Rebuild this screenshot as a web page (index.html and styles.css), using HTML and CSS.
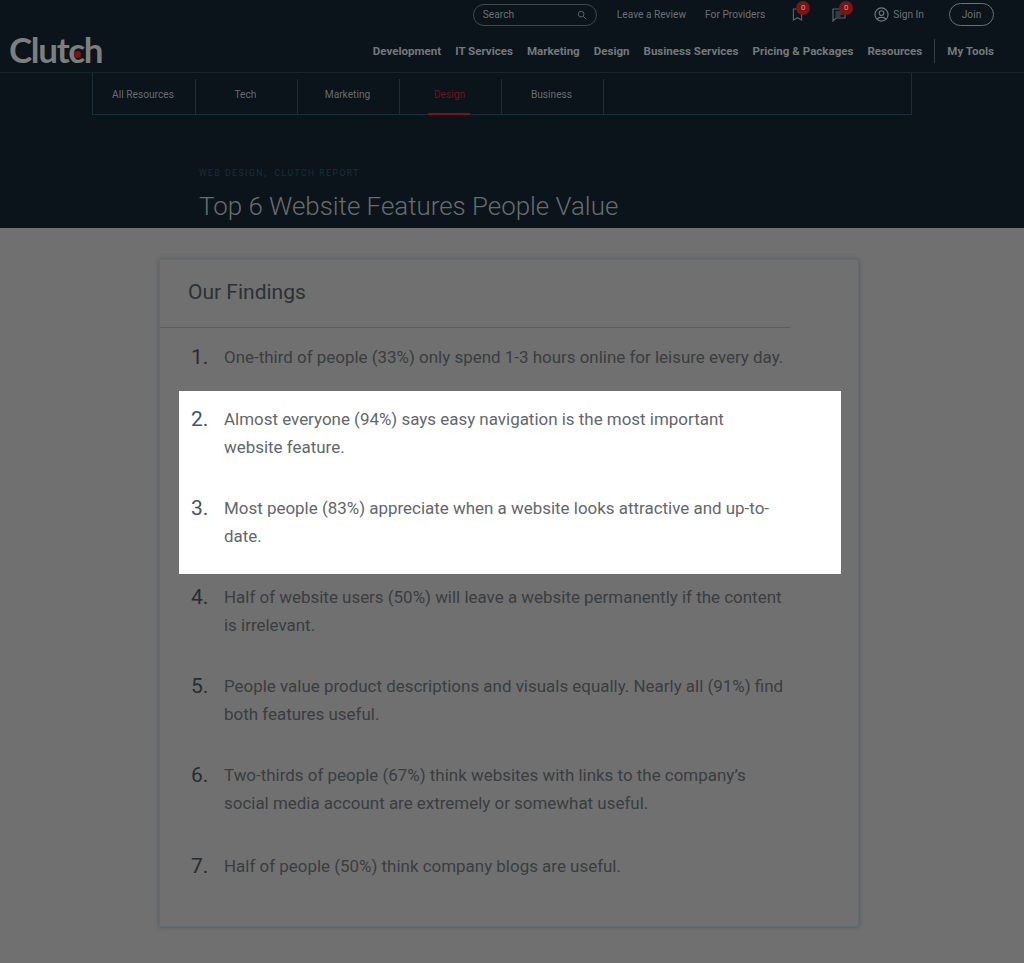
FILE: index.html
```html
<!DOCTYPE html>
<html lang="en">
<head>
    <meta charset="UTF-8">
    <title>Top 6 Website Features People Value</title>
    <link rel="stylesheet" href="styles.css">
</head>
<body>
    <header class="site-header">
        <div class="top-bar">
            <div class="search-box">
                <span>Search</span>
                <svg class="search-icon" viewBox="0 0 12 12" width="10" height="10"><circle cx="5" cy="5" r="3.4"/><path d="M7.6 7.6 11 11"/></svg>
            </div>
            <a class="top-link review-link">Leave a Review</a>
            <a class="top-link">For Providers</a>
            <div class="icon-badge bookmark">
                <svg viewBox="0 0 12 14" width="11" height="13"><path d="M1.5 1h9v12L6 10.5 1.500 13z"/></svg>
                <span class="badge">0</span>
            </div>
            <div class="icon-badge messages">
                <svg viewBox="0 0 14 14" width="14" height="14"><path d="M1 1h12v9H4l-3 3zM3.500 4h7M3.500 6h7M3.500 8h5"/></svg>
                <span class="badge">0</span>
            </div>
            <a class="top-link sign-in">
                <svg viewBox="0 0 16 16" width="15" height="15"><circle cx="8" cy="8" r="7"/><circle cx="8" cy="6.500" r="2.500"/><path d="M3.500 13c1-2.500 8-2.500 9 0"/></svg>
                Sign In
            </a>
            <a class="join-btn">Join</a>
        </div>

        <div class="main-bar">
            <div class="logo">Clutch<span class="logo-dot"></span></div>
            <nav class="main-nav">
                <a>Development</a>
                <a>IT Services</a>
                <a>Marketing</a>
                <a>Design</a>
                <a>Business Services</a>
                <a>Pricing &amp; Packages</a>
                <a>Resources</a>
                <a class="my-tools">My Tools</a>
            </nav>
        </div>

        <div class="sub-nav-wrap">
            <nav class="sub-nav">
                <a>All Resources</a>
                <a>Tech</a>
                <a>Marketing</a>
                <a class="active">Design</a>
                <a>Business</a>
            </nav>
        </div>

        <div class="post-head">
            <p class="post-cats">WEB DESIGN,&nbsp; CLUTCH REPORT</p>
            <h1>Top 6 Website Features People Value</h1>
        </div>
    </header>

    <main class="content">
        <section class="findings">
            <h2>Our Findings</h2>
            <ol class="findings-list">
                <li class="finding"><span class="num">1.</span><p>One-third of people (33%) only spend 1-3 hours online for leisure every day.</p></li>
                <li class="highlight">
                    <ol class="findings-list">
                        <li class="finding"><span class="num">2.</span><p>Almost everyone (94%) says easy navigation is the most important website feature.</p></li>
                        <li class="finding"><span class="num">3.</span><p>Most people (83%) appreciate when a website looks attractive and up-to-date.</p></li>
                    </ol>
                </li>
                <li class="finding"><span class="num">4.</span><p>Half of website users (50%) will leave a website permanently if the content is irrelevant.</p></li>
                <li class="finding"><span class="num">5.</span><p>People value product descriptions and visuals equally. Nearly all (91%) find both features useful.</p></li>
                <li class="finding"><span class="num">6.</span><p>Two-thirds of people (67%) think websites with links to the company’s social media account are extremely or somewhat useful.</p></li>
                <li class="finding last"><span class="num">7.</span><p>Half of people (50%) think company blogs are useful.</p></li>
            </ol>
        </section>
    </main>
</body>
</html>
```

FILE: styles.css
```css
body {
    margin: 0;
    background-color: #707070;
    font-family: Roboto, "Liberation Sans", sans-serif;
    height: 963px;
    overflow: hidden;
}

/* header */
.site-header {
    background-color: #0a141a;
    height: 228px;
    box-sizing: border-box;
    overflow: hidden;
}

.top-bar {
    display: flex;
    justify-content: flex-end;
    align-items: center;
    height: 23px;
    padding: 3px 30px 0 0;
    font-size: 10.200px;
    color: #6c7174;
}

.search-box {
    display: flex;
    justify-content: space-between;
    align-items: center;
    width: 124px;
    height: 22px;
    box-sizing: border-box;
    padding: 0 9px 0 9px;
    border: 1px solid #3c4a50;
    border-radius: 11px;
}

.search-icon {
    fill: none;
    stroke: #5d6367;
    stroke-width: 1.200;
}

.top-link {
    white-space: nowrap;
}

.review-link {
    margin-left: 20px;
}

.review-link + .top-link {
    margin-left: 19px;
}

.icon-badge {
    position: relative;
    display: flex;
    margin-left: 27px;
}

.icon-badge svg {
    fill: none;
    stroke: #5f6467;
    stroke-width: 1.200;
}

.messages {
    margin-left: 29px;
}

.badge {
    position: absolute;
    top: -7px;
    right: -7px;
    width: 14px;
    height: 14px;
    border-radius: 50%;
    background-color: #7c1416;
    color: #b9a3a3;
    font-size: 8px;
    line-height: 14px;
    text-align: center;
}

.sign-in {
    display: flex;
    align-items: center;
    gap: 4px;
    margin-left: 28px;
}

.sign-in svg {
    fill: none;
    stroke: #74797c;
    stroke-width: 1.200;
}

.join-btn {
    width: 45px;
    height: 23px;
    box-sizing: border-box;
    margin-left: 25px;
    border: 1px solid #6c7174;
    border-radius: 12px;
    line-height: 21px;
    text-align: center;
}

.main-bar {
    display: flex;
    justify-content: space-between;
    align-items: center;
    height: 46px;
    padding: 0 30px 0 9px;
    border-bottom: 1px solid #17262d;
}

.logo {
    position: relative;
    font-family: Lato, sans-serif;
    font-size: 35px;
    font-weight: 700;
    line-height: 47px;
    letter-spacing: -1.300px;
    color: #7e7e7e;
}

.logo-dot {
    position: absolute;
    left: 65px;
    top: 25px;
    width: 7px;
    height: 7px;
    border-radius: 50%;
    background-color: #7c1416;
}

.main-nav {
    display: flex;
    align-items: center;
    gap: 14px;
    padding-top: 3px;
    font-size: 11.550px;
    font-weight: 700;
    color: #74797c;
}

.my-tools {
    margin-left: -2px;
    padding-left: 12px;
    line-height: 24px;
    border-left: 1px solid #333d42;
}

/* resources tabs */
.sub-nav-wrap {
    box-sizing: border-box;
    width: 820px;
    height: 42px;
    margin-left: 92px;
    border: 1px solid #17303a;
    border-top: none;
}

.sub-nav {
    display: flex;
    height: 100%;
    align-items: flex-end;
}

.sub-nav a {
    position: relative;
    box-sizing: border-box;
    width: 102px;
    height: 35px;
    padding: 10px 2px 0 0;
    border-right: 1px solid #17303a;
    font-size: 10.200px;
    text-align: center;
    color: #676c6f;
}

.sub-nav a:first-child {
    width: 103px;
}

.sub-nav a.active {
    color: #6e1418;
}

.sub-nav a.active::after {
    content: "";
    position: absolute;
    left: 28px;
    right: 31px;
    bottom: -1px;
    height: 2px;
    background-color: #7c1416;
}

.post-head {
    padding: 52px 0 0 199px;
}

.post-cats {
    margin: 0;
    font-size: 8.500px;
    line-height: 12px;
    letter-spacing: 1.550px;
    color: #1a2f3c;
}

.post-head h1 {
    margin: 11px 0 0;
    font-size: 25.900px;
    font-weight: 300;
    line-height: 33px;
    color: #686c6f;
}

/* findings card */
.content {
    padding: 31px 0 0 159px;
}

.findings {
    box-sizing: border-box;
    width: 700px;
    height: 668px;
    border: 1px solid #616c72;
    box-shadow: 0 0 4px rgba(50, 65, 75, 0.5);
}

.findings h2 {
    box-sizing: border-box;
    width: 630px;
    height: 68px;
    margin: 0;
    padding: 18px 0 0 28px;
    border-bottom: 1px solid #5e5e5e;
    font-size: 21px;
    font-weight: 400;
    line-height: 28px;
    color: #2b3136;
}

.findings-list {
    list-style: none;
    margin: 0;
    padding: 0;
}

.findings > .findings-list {
    padding: 15px 0 0 31px;
}

.finding {
    display: flex;
    margin-bottom: 33px;
}

.finding p {
    width: 561px;
    margin: 0;
    font-size: 16.950px;
    line-height: 28px;
    color: #3a3d40;
}

.num {
    flex: none;
    width: 33px;
    font-size: 21px;
    line-height: 28px;
    color: #262c31;
}

.finding.last {
    margin-top: 35px;
}

.highlight {
    width: 662px;
    box-sizing: border-box;
    margin: -13px 0 9px -12px;
    padding: 14px 0 24px 12px;
    background-color: #fff;
}

.highlight .finding:last-child {
    margin-bottom: 0;
}

.highlight p {
    color: #62676c;
}

.highlight .num {
    color: #48535d;
}
```
